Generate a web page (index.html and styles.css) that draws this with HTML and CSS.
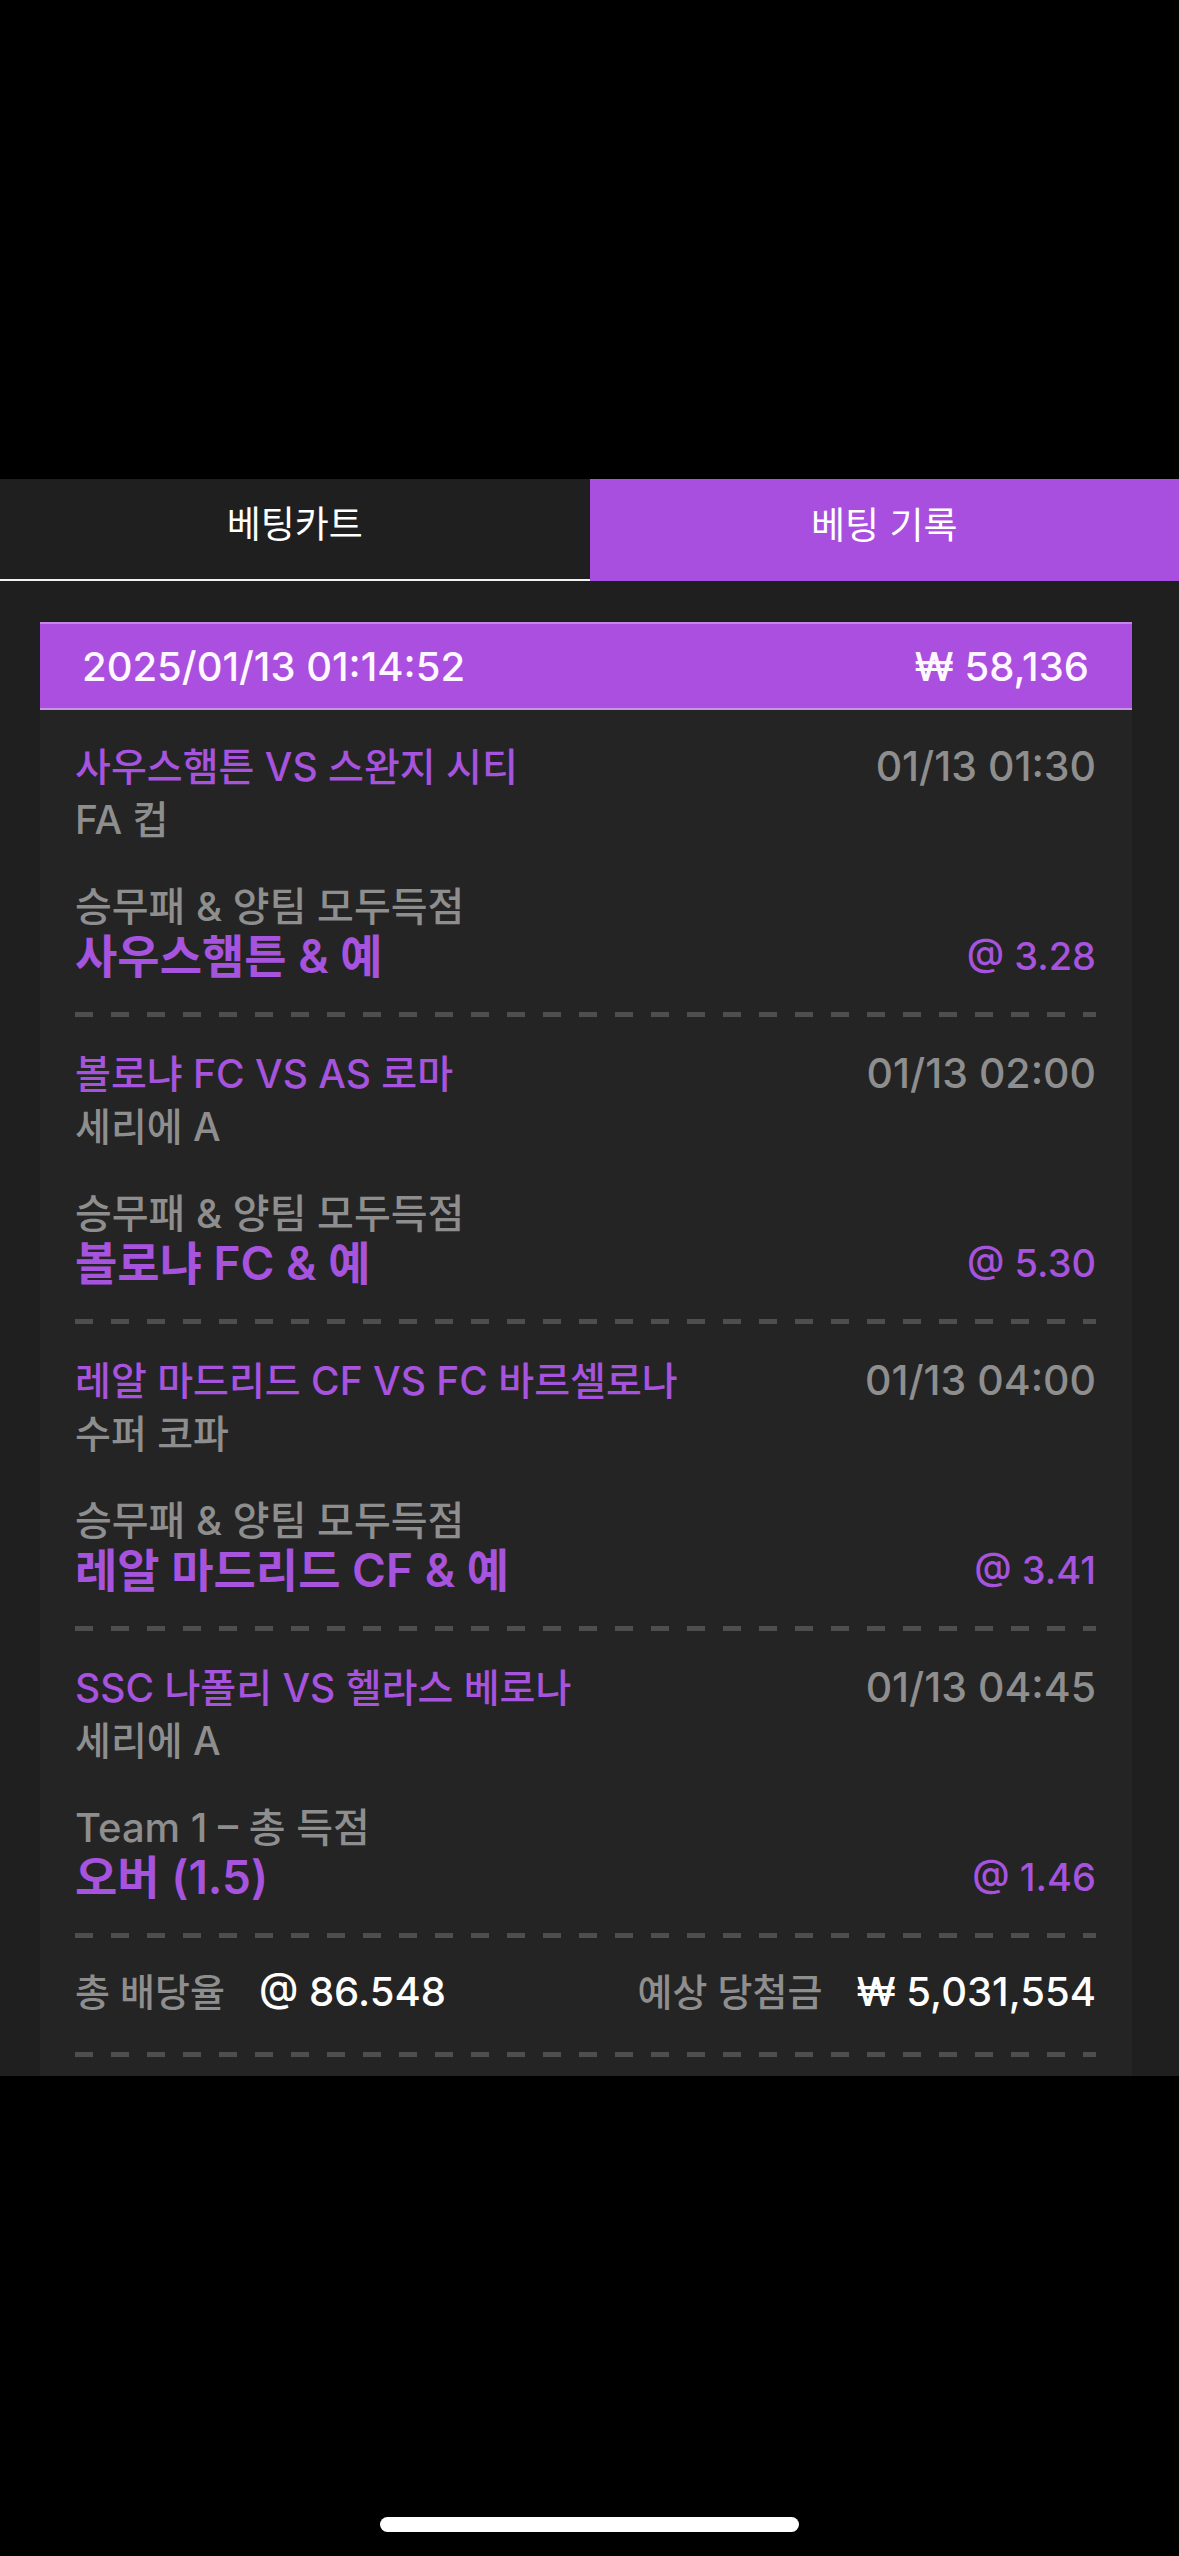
FILE: index.html
```html
<!DOCTYPE html>
<html lang="ko">
<head>
<meta charset="utf-8">
<title>베팅 기록</title>
<link rel="stylesheet" href="styles.css">
</head>
<body>
<div class="screen">
  <div class="top-space"></div>
  <nav class="tabs">
    <div class="tab tab-cart">베팅카트</div>
    <div class="tab tab-history">베팅 기록</div>
  </nav>
  <section class="panel">
    <div class="card">
      <div class="card-head">
        <span>2025/01/13 01:14:52</span>
        <span>₩ 58,136</span>
      </div>

      <div class="bet">
        <div class="row match"><span class="team">사우스햄튼 VS 스완지 시티</span><span class="time">01/13 01:30</span></div>
        <div class="league">FA 컵</div>
        <div class="market">승무패 &amp; 양팀 모두득점</div>
        <div class="row pick"><span class="sel">사우스햄튼 &amp; 예</span><span class="odds">@ 3.28</span></div>
      </div>
      <div class="dash"></div>

      <div class="bet">
        <div class="row match"><span class="team">볼로냐 FC VS AS 로마</span><span class="time">01/13 02:00</span></div>
        <div class="league">세리에 A</div>
        <div class="market">승무패 &amp; 양팀 모두득점</div>
        <div class="row pick"><span class="sel">볼로냐 FC &amp; 예</span><span class="odds">@ 5.30</span></div>
      </div>
      <div class="dash"></div>

      <div class="bet">
        <div class="row match"><span class="team">레알 마드리드 CF VS FC 바르셀로나</span><span class="time">01/13 04:00</span></div>
        <div class="league">수퍼 코파</div>
        <div class="market">승무패 &amp; 양팀 모두득점</div>
        <div class="row pick"><span class="sel">레알 마드리드 CF &amp; 예</span><span class="odds">@ 3.41</span></div>
      </div>
      <div class="dash"></div>

      <div class="bet">
        <div class="row match"><span class="team">SSC 나폴리 VS 헬라스 베로나</span><span class="time">01/13 04:45</span></div>
        <div class="league">세리에 A</div>
        <div class="market">Team 1 – 총 득점</div>
        <div class="row pick"><span class="sel">오버 (1.5)</span><span class="odds">@ 1.46</span></div>
      </div>
      <div class="dash"></div>

      <div class="totals">
        <div class="total-group"><span class="label">총 배당율</span><span class="value">@ 86.548</span></div>
        <div class="total-group"><span class="label">예상 당첨금</span><span class="value">₩ 5,031,554</span></div>
      </div>
      <div class="dash"></div>
    </div>
  </section>
  <div class="home-indicator"></div>
</div>
</body>
</html>
```

FILE: styles.css
```css
* { box-sizing: border-box; }

html, body {
  margin: 0;
  padding: 0;
  background: #000;
}

body {
  font-family: Inter, "Noto Sans CJK KR", sans-serif;
  font-weight: 500;
  color: #fff;
}

.screen {
  position: relative;
  width: 1179px;
  height: 2556px;
  background: #000;
  overflow: hidden;
}

.top-space { height: 479px; }

.tabs {
  display: flex;
  height: 102px;
}

.tab {
  flex: 1;
  display: flex;
  align-items: center;
  justify-content: center;
  padding-bottom: 14px;
  font-size: 37px;
  font-weight: 400;
  color: #fff;
}

.tab-cart {
  background: #1f1f1f;
  border-bottom: 2px solid #f2f2f2;
}

.tab-history {
  background: #a94fdf;
}

.panel {
  background: #1f1f1f;
  padding: 41px 47px 0 40px;
  height: 1495px;
}

.card {
  background: #242424;
  height: 100%;
}

.card-head {
  height: 88px;
  display: flex;
  align-items: center;
  justify-content: space-between;
  padding: 0 43px 0 42px;
  background: #aa4fdf;
  border-top: 2px solid #c486e6;
  border-bottom: 2px solid #c993e6;
  font-size: 40px;
  font-weight: 500;
  color: #fdf7ff;
}

.bet {
  padding: 29px 36px 0 35px;
}

.row {
  display: flex;
  justify-content: space-between;
  align-items: baseline;
}

.match {
  height: 54px;
}

.team {
  font-size: 39px;
  line-height: 54px;
  color: #a653dd;
}

.time {
  font-size: 41px;
  line-height: 54px;
  color: #8e8e8e;
}

.league {
  height: 54px;
  font-size: 39px;
  line-height: 54px;
  color: #8e8e8e;
}

.market {
  height: 48px;
  margin-top: 36px;
  font-size: 40px;
  line-height: 48px;
  color: #8e8e8e;
}

.pick {
  height: 50px;
  margin-bottom: 31px;
  align-items: center;
}

.sel {
  font-size: 46px;
  line-height: 50px;
  font-weight: 600;
  color: #a653dd;
}

.odds {
  font-size: 38px;
  line-height: 50px;
  font-weight: 500;
  color: #a653dd;
}

.dash {
  height: 5px;
  margin: 0 36px 0 35px;
  background: repeating-linear-gradient(to right, #4e4e4e 0 18px, transparent 18px 36px);
}

.totals {
  display: flex;
  justify-content: space-between;
  align-items: baseline;
  padding: 27px 36px 0 35px;
  margin-bottom: 33px;
  box-sizing: content-box;
  height: 54px;
}

.total-group {
  display: flex;
  align-items: baseline;
  gap: 34px;
  height: 54px;
  line-height: 54px;
}

.label {
  font-size: 38px;
  color: #8e8e8e;
}

.value {
  font-size: 40px;
  font-weight: 500;
  color: #fff;
}

.home-indicator {
  position: absolute;
  left: 380px;
  top: 2517px;
  width: 419px;
  height: 15px;
  border-radius: 8px;
  background: #fff;
}
```
